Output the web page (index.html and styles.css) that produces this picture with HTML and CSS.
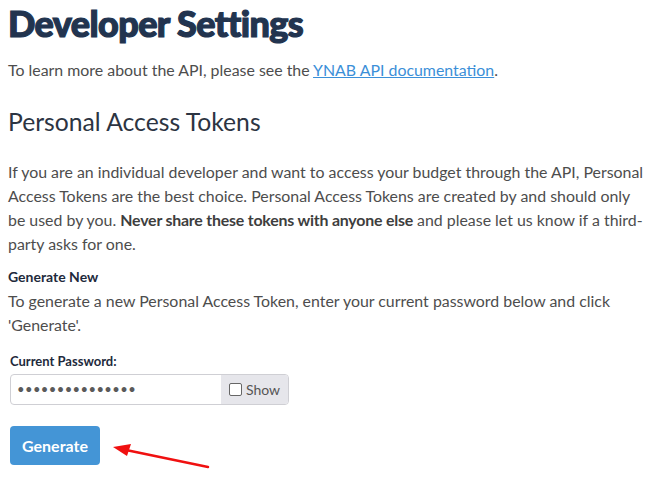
FILE: index.html
```html
<!DOCTYPE html>
<html>
<head>
<meta charset="utf-8">
<link rel="stylesheet" href="styles.css">
</head>
<body>
<main class="page">
  <h1 class="title">Developer Settings</h1>
  <p class="intro">To learn more about the API, please see the <a href="#" class="link">YNAB API documentation</a>.</p>
  <h2 class="subtitle">Personal Access Tokens</h2>
  <p class="para">If you are an individual developer and want to access your budget through the API, Personal Access Tokens are the best choice. Personal Access Tokens are created by and should only be used by you. <strong>Never share these tokens with anyone else</strong> and please let us know if a third-party asks for one.</p>
  <h3 class="label-head">Generate New</h3>
  <p class="para para-tight">To generate a new Personal Access Token, enter your current password below and click 'Generate'.</p>
  <form class="form">
    <label class="field-label">Current Password:</label>
    <div class="input-group">
      <span class="dots">&#8226;&#8226;&#8226;&#8226;&#8226;&#8226;&#8226;&#8226;&#8226;&#8226;&#8226;&#8226;&#8226;&#8226;&#8226;</span>
      <span class="addon"><span class="checkbox"></span>Show</span>
    </div>
    <div class="actions">
      <button type="button" class="btn">Generate</button>
      <svg class="arrow" width="110" height="30" viewBox="0 0 110 30">
        <line x1="96" y1="25" x2="14" y2="8" stroke="#f01010" stroke-width="2.5" stroke-linecap="round"/>
        <polygon points="1,5 19,2 15,14" fill="#f01010"/>
      </svg>
    </div>
  </form>
</main>
</body>
</html>
```
FILE: styles.css
```css
html, body {
  margin: 0;
  padding: 0;
  background: #fff;
}
.page {
  padding: 0 16px 0 8px;
  font-family: Lato, "Open Sans", sans-serif;
  color: #4d4d4d;
  font-size: 15.9px;
}
.title {
  margin: 0;
  padding-top: 3px;
  font-family: Lato, sans-serif;
  font-weight: 900;
  font-size: 36px;
  line-height: 40px;
  color: #22344f;
  letter-spacing: -0.6px;
  -webkit-text-stroke: 1.2px #22344f;
}
.intro {
  margin: 15px 0 0;
  line-height: 24px;
}
.link {
  color: #3b8fd8;
  text-decoration: underline;
}
.subtitle {
  margin: 25px 0 0;
  font-weight: 400;
  font-size: 24.7px;
  line-height: 30px;
  color: #2c3442;
}
.para {
  margin: 23px 0 0;
  line-height: 24px;
}
.para strong {
  font-weight: 700;
  color: #3e3e3e;
  letter-spacing: -0.2px;
}
.label-head {
  margin: 9px 0 0;
  font-size: 14px;
  font-weight: 700;
  line-height: 24px;
  color: #1e2a3c;
}
.para-tight {
  margin-top: 0;
}
.form {
  margin-top: 14px;
  padding-left: 2px;
}
.field-label {
  display: block;
  font-size: 13px;
  font-weight: 700;
  line-height: 20px;
  color: #1e2a3c;
}
.input-group {
  display: flex;
  width: 279px;
  height: 31px;
  margin-top: 3px;
  box-sizing: border-box;
  border: 1px solid #cfcfd4;
  border-radius: 4px;
  overflow: hidden;
}
.dots {
  flex: 1;
  padding-left: 6px;
  font-size: 13px;
  line-height: 29px;
  color: #5a5a5a;
  letter-spacing: 0.4px;
}
.addon {
  display: flex;
  align-items: center;
  gap: 4px;
  width: 67px;
  box-sizing: border-box;
  padding-left: 8px;
  background: #e6e6eb;
  font-size: 14px;
  color: #555;
}
.checkbox {
  width: 11px;
  height: 11px;
  border: 1px solid #666;
  border-radius: 2px;
  background: #fff;
}
.actions {
  display: flex;
  align-items: flex-start;
  margin-top: 21px;
}
.btn {
  width: 90px;
  height: 39px;
  border: none;
  border-radius: 4px;
  background: #4495d6;
  color: #fff;
  font-family: Lato, sans-serif;
  font-weight: 700;
  font-size: 16px;
  padding: 0;
}
.arrow {
  margin-left: 12px;
  margin-top: 16px;
}
```
